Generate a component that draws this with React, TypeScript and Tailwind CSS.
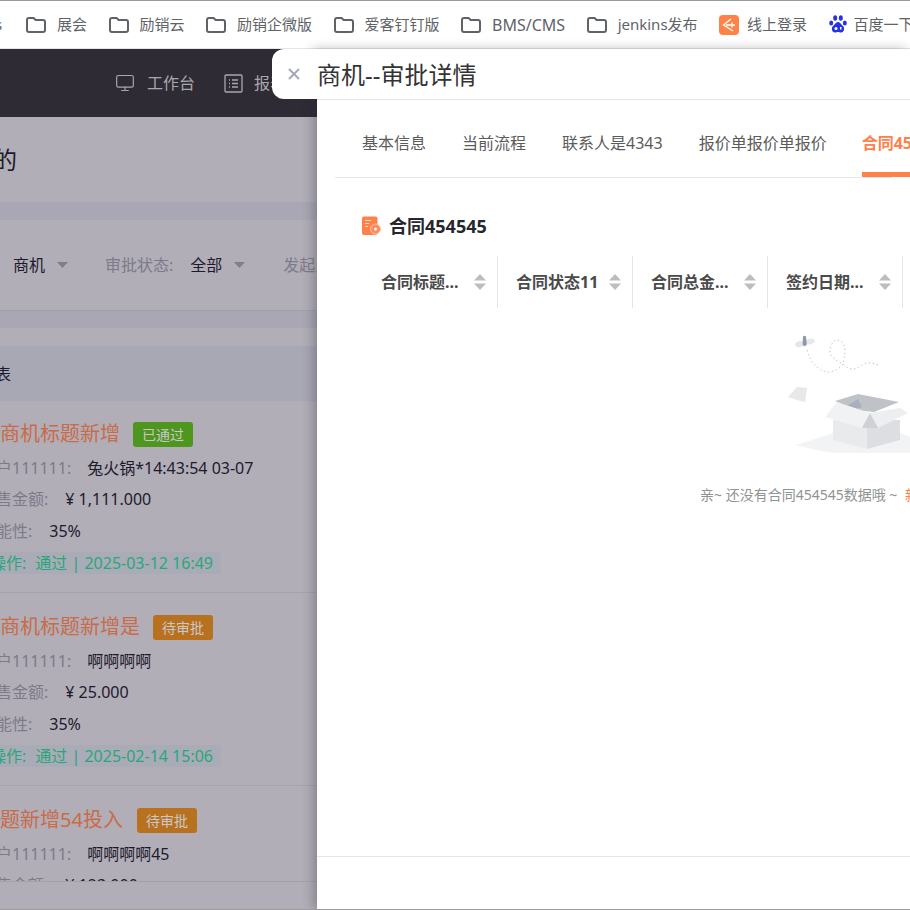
import { Monitor, X } from 'lucide-react';

type Deal = {
  title: string;
  status: string;
  statusClass: string;
  gap: string;
  customer: string;
  amount: string;
  date: string;
};

const deals: Deal[] = [
  {
    title: '新商机标题新增',
    status: '已通过',
    statusClass: 'bg-[#4e961d]',
    gap: 'gap-[13px]',
    customer: '兔火锅*14:43:54 03-07',
    amount: '¥ 1,111.000',
    date: '2025-03-12 16:49',
  },
  {
    title: '新商机标题新增是',
    status: '待审批',
    statusClass: 'bg-[#b8721f]',
    gap: 'gap-[13px]',
    customer: '啊啊啊啊',
    amount: '¥ 25.000',
    date: '2025-02-14 15:06',
  },
  {
    title: '标题新增54投入',
    status: '待审批',
    statusClass: 'bg-[#b8721f]',
    gap: 'gap-[14px]',
    customer: '啊啊啊啊45',
    amount: '¥ 123.000',
    date: '2025-02-14 15:06',
  },
];

const tabs = ['基本信息', '当前流程', '联系人是4343', '报价单报价单报价'];
const columns = ['合同标题...', '合同状态11', '合同总金...', '签约日期...', ''];
const folders = ['展会', '励销云', '励销企微版', '爱客钉钉版', 'BMS/CMS', 'jenkins发布'];

function FolderIcon() {
  return (
    <svg width="20" height="16" viewBox="0 0 20 16" fill="none" className="shrink-0">
      <path
        d="M1 3a2 2 0 0 1 2-2h4.600l2 2H17a2 2 0 0 1 2 2v8a2 2 0 0 1-2 2H3a2 2 0 0 1-2-2z"
        stroke="#5f6368"
        strokeWidth="2"
      />
    </svg>
  );
}

function LoginIcon() {
  return (
    <svg width="20" height="20" viewBox="0 0 20 20" className="shrink-0">
      <rect width="20" height="20" rx="4" fill="#ff8347" />
      <path d="M12 4 4.500 10l9.500 6" stroke="#fff" strokeWidth="1.300" fill="none" />
      <path d="M7 10h9M13 7.500v5" stroke="#fff" strokeWidth="1.300" fill="none" />
    </svg>
  );
}

function BaiduIcon() {
  return (
    <svg width="18" height="19" viewBox="0 0 18 19" className="shrink-0">
      <ellipse cx="2.200" cy="8" rx="2" ry="2.600" fill="#2932e1" />
      <ellipse cx="6.200" cy="3" rx="2" ry="2.800" fill="#2932e1" />
      <ellipse cx="11.800" cy="3" rx="2" ry="2.800" fill="#2932e1" />
      <ellipse cx="15.800" cy="8" rx="2" ry="2.600" fill="#2932e1" />
      <path d="M9 7c2.400 0 3 2.400 5 4 2 1.800 1.200 6.500-2 6.500-1.300 0-2-.5-3-.5s-1.700.5-3 .5c-3.200 0-4-4.700-2-6.500 2-1.600 2.600-4 5-4z" fill="#2932e1" />
      <circle cx="7" cy="13.500" r="1.500" fill="#fff" />
      <path d="M11 12v2.500h1.500V12z" fill="#fff" />
    </svg>
  );
}

function ReportIcon() {
  return (
    <svg width="19" height="19" viewBox="0 0 19 19" fill="none" stroke="#a9a7ad" strokeWidth="1.300" className="shrink-0">
      <rect x="1" y="1" width="17" height="17" rx="1" />
      <path d="M5 6h1M5 9.500h1M5 13h1M8 6h6M8 9.500h6M8 13h6" />
    </svg>
  );
}

function Caret({ className }: { className: string }) {
  return (
    <svg width="11" height="6" viewBox="0 0 11 6" className={className}>
      <path d="M0 0h11L5.500 6z" fill="#7f7d8e" />
    </svg>
  );
}

function SortIcon() {
  return (
    <svg width="12" height="16" viewBox="0 0 12 16" className="shrink-0">
      <path d="M6 0l6 6.500H0z" fill="#bdbdbd" />
      <path d="M0 9.500h12L6 16z" fill="#bdbdbd" />
    </svg>
  );
}

function ContractIcon() {
  return (
    <svg width="19" height="20" viewBox="0 0 19 20" className="shrink-0">
      <rect width="15.500" height="18.500" y="0.500" rx="2" fill="#ff8149" />
      <path d="M3 4.500h6M3 7.500h4M3 10.500h3" stroke="#ffd9c6" strokeWidth="1" />
      <circle cx="13.500" cy="13" r="5" fill="#ff8a5a" stroke="#ffc4ad" strokeWidth="1" />
      <circle cx="13.500" cy="13" r="1.500" fill="#fff" />
    </svg>
  );
}

// empty state picture: bee with dotted trail, loose sheet, open carton
function EmptyBox() {
  return (
    <svg width="115" height="125" viewBox="0 0 115 125" className="shrink-0 overflow-visible">
      <ellipse cx="5" cy="9" rx="5" ry="3" fill="#e3e6ea" transform="rotate(-15 5 9)" />
      <ellipse cx="15" cy="6.500" rx="5" ry="2.800" fill="#e6e9ec" transform="rotate(-15 15 6.500)" />
      <path d="M8 1.500a2 2 0 0 1 3 0l.8 8-2.200 2-2-2z" fill="#8d98a8" />
      <path
        d="M12 15c2 8 6 14 10 17 4 3 7 5 11 5 6 0 11-3 15-8-6-3-13-7-13-12 0-6 3-12 7-12 5 0 8 5 8 10 0 5-1 8-2 14 3 3 6 5 10 5 5 0 9-5 14-6 4-1 9 2 13 2"
        stroke="#c4c9ce"
        strokeWidth="1"
        strokeDasharray="1.500 2.500"
        fill="none"
      />
      <path d="M-7 62l9-10 10 1-2 14-8-2z" fill="#e6e8ea" />
      <path d="M0 110c14-3 26-9 38-12l67 0c4 2 8 3 10 4v16H40C26 117 12 112 0 110z" fill="#f1f3f4" />
      <path d="M40 66l23-7 41 8-25 10-20-2z" fill="#bfc2c6" />
      <path d="M52 71l11-7 4 8-8 3z" fill="#a8b0bd" />
      <path d="M38 85h34v29l-34-9z" fill="#e8eaec" />
      <path d="M72 85h33v20l-33 9z" fill="#dcdee1" />
      <path d="M30 82l12-15 33 11-8 15z" fill="#f0f2f4" />
      <path d="M105 73l8 5-30 15-8-15z" fill="#eceef0" />
      <path d="M75 78l-8 15h16z" fill="#cfd1d4" />
    </svg>
  );
}

export default function App() {
  return (
    <div className="flex h-[910px] w-[910px] flex-col overflow-hidden border-y border-y-[#9a9a9a] font-['Noto_Sans','Noto_Sans_CJK_SC',sans-serif]">
      <nav className="flex h-[48px] shrink-0 items-center gap-[21.5px] whitespace-nowrap border-b border-[#e5e5e5] bg-white text-[15px] text-[#5f6368]">
        <span className="-ml-[5px] w-[9.500px] shrink-0">s</span>
        {folders.map((name) => (
          <span key={name} className="flex shrink-0 items-center gap-[11px]">
            <FolderIcon />
            <span className={name === 'BMS/CMS' ? 'text-[16px]' : ''}>{name}</span>
          </span>
        ))}
        <span className="flex shrink-0 items-center gap-[8px]">
          <LoginIcon />
          线上登录
        </span>
        <span className="flex shrink-0 items-center gap-[7px]">
          <BaiduIcon />
          百度一下
        </span>
      </nav>

      <div className="flex min-h-0 flex-1">
        <aside className="flex w-[317px] shrink-0 flex-col overflow-hidden whitespace-nowrap bg-[#b1aeb7] text-[16px] text-[#1e1a2e]">
          <header className="flex h-[68px] shrink-0 items-center bg-[#2e2b35] pl-[115px] text-[#a9a7ad]">
            <Monitor size={20} strokeWidth={1.4} className="shrink-0" />
            <span className="ml-[12px]">工作台</span>
            <span className="ml-[29px]">
              <ReportIcon />
            </span>
            <span className="ml-[11px]">报表</span>
          </header>

          <h2 className="-ml-[31px] flex h-[85px] shrink-0 items-center text-[24px]">我的</h2>
          <div className="h-[18px] shrink-0 bg-[#a8a7b3]" />

          <div className="flex h-[90px] shrink-0 items-center pl-[13px]">
            <span>商机</span>
            <Caret className="ml-[12px] shrink-0" />
            <span className="ml-[37px] text-[#7d7a8a]">审批状态:</span>
            <span className="ml-[17px]">全部</span>
            <Caret className="ml-[12px] shrink-0" />
            <span className="ml-[38px] text-[#7d7a8a]">发起人</span>
          </div>

          <div className="h-[18px] shrink-0 border-t border-[#a0a0aa] bg-[#a8a7b3]" />

          <div className="mt-[18px] flex h-[55px] shrink-0 items-center bg-[#a8a7b4]">
            <span className="-ml-[21px]">列表</span>
          </div>

          <div className="-mt-px min-h-0 flex-1 overflow-hidden">
            {deals.map((deal) => (
              <div key={deal.title} className="-ml-[20px] border-b border-[#a5a3ae] pb-[18.5px] pt-[17px]">
                <div className={`mb-px flex h-[34px] items-center ${deal.gap}`}>
                  <span className="text-[20px] text-[#c96b48]">{deal.title}</span>
                  <span
                    className={`flex h-[25px] w-[60px] items-center justify-center rounded-[3px] text-[14px] text-[#c9c7cc] ${deal.statusClass}`}
                  >
                    {deal.status}
                  </span>
                </div>
                <div className="flex h-[31.5px] items-center gap-[16px]">
                  <span className="text-[#7d7a8a]">客户111111:</span>
                  <span>{deal.customer}</span>
                </div>
                <div className="flex h-[31.5px] items-center gap-[17px]">
                  <span className="text-[#7d7a8a]">销售金额:</span>
                  <span>{deal.amount}</span>
                </div>
                <div className="flex h-[31.5px] items-center gap-[17px]">
                  <span className="text-[#7d7a8a]">可能性:</span>
                  <span>35%</span>
                </div>
                <div className="-ml-[6px] mt-[5px] flex h-[22px] w-fit items-center bg-[#a9abb7] pr-[8px] text-[#2aa77a]">
                  <span className="mr-[9px]">次操作:</span>
                  <span>通过 | {deal.date}</span>
                </div>
              </div>
            ))}
          </div>

          <div className="h-[28px] shrink-0 border-t border-[#a3a1ac] bg-[#b1aeb7]" />
        </aside>

        <main className="relative z-10 flex min-w-0 flex-1 flex-col whitespace-nowrap bg-white shadow-[-4px_0_10px_rgba(40,38,50,0.3)]">
          <button className="absolute -left-[45px] top-0 flex h-[50px] w-[45px] items-center rounded-l-[12px] bg-white pl-[13px] text-[#a3a8bb]">
            <X size={18} strokeWidth={2.5} />
          </button>

          <div className="flex h-[51px] shrink-0 items-center border-b border-[#e6e6e6] pt-[2px] text-[24px] text-[#333]">
            商机--审批详情
          </div>

          <div className="mx-[18px] flex h-[78px] shrink-0 gap-[36px] border-b border-[#e6e6e6] pl-[27px] text-[16px] text-[#5b5b5b]">
            {tabs.map((tab) => (
              <span key={tab} className="flex shrink-0 items-center border-b-[5px] border-transparent pt-[13px]">
                {tab}
              </span>
            ))}
            <span className="-ml-px flex shrink-0 items-center border-b-[5px] border-[#ff8149] pt-[13px] font-bold text-[#ff8149]">
              合同454545
            </span>
          </div>

          <div className="min-h-0 flex-1 overflow-hidden">
            <div className="mt-[36px] flex h-[24px] items-center gap-[8px] pl-[45px] text-[18px] font-bold text-[#26262e]">
              <ContractIcon />
              合同454545
            </div>

            <div className="ml-[46px] mt-[18px] flex h-[52px] text-[16px] font-bold text-[#4a4a4a]">
              {columns.map((col, index) => (
                <div
                  key={index}
                  className="flex w-[135px] shrink-0 items-center justify-between border-r border-[#e5e5e5] pl-[18px] pr-[11px]"
                >
                  <span>{col}</span>
                  <SortIcon />
                </div>
              ))}
            </div>

            <div className="ml-[478px] mt-[27px] flex">
              <EmptyBox />
            </div>

            <p className="ml-[383px] mt-[25px] text-[14px] leading-[20px] text-[#8f9491]">
              亲~ 还没有合同454545数据哦 ~ <span className="ml-[4px] text-[#ff8149]">新增</span>
            </p>
          </div>

          <div className="h-[53px] shrink-0 border-t border-[#e6e6e6] bg-white" />
        </main>
      </div>
    </div>
  );
}
